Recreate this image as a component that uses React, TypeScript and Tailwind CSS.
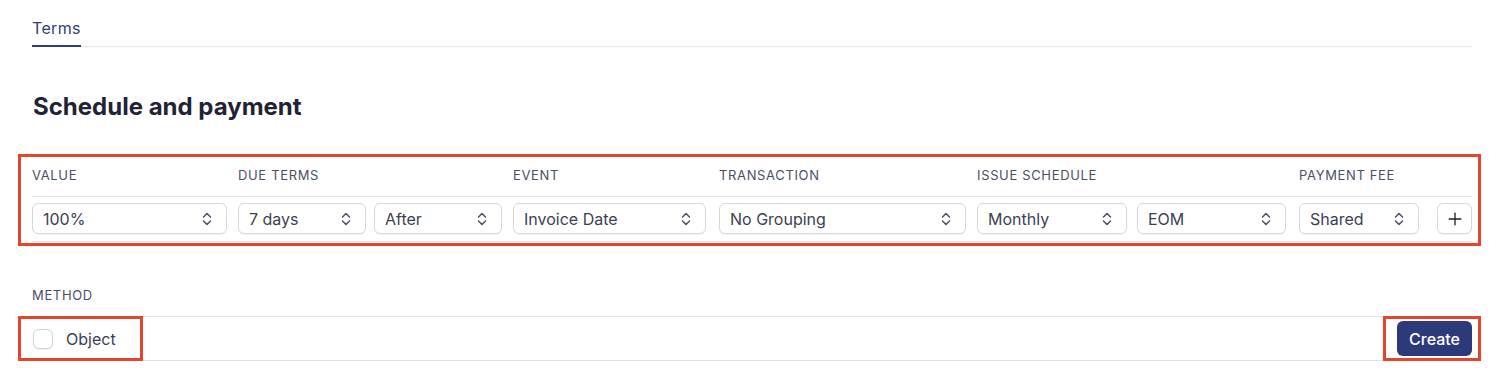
import { Plus } from 'lucide-react'

const ROW = [
  { value: '100%', className: 'w-[195px]' },
  { value: '7 days', className: 'w-[128px]' },
  { value: 'After', className: 'w-[128px]' },
  { value: 'Invoice Date', className: 'w-[193px]' },
  { value: 'No Grouping', className: 'w-[247px]' },
  { value: 'Monthly', className: 'w-[150px]' },
  { value: 'EOM', className: 'w-[149px]' },
  { value: 'Shared', className: 'w-[120px]' },
]

const HEADERS = [
  { label: 'Value', className: 'col-span-1' },
  { label: 'Due terms', className: 'col-span-2' },
  { label: 'Event', className: 'col-span-1' },
  { label: 'Transaction', className: 'col-span-1' },
  { label: 'Issue schedule', className: 'col-span-2' },
  { label: 'Payment fee', className: 'col-span-1' },
  { label: '', className: 'col-span-1' },
]

const COLS = 'grid grid-cols-[206px_136px_139px_206px_258px_160px_162px_138px_35px]'

function Chevrons() {
  return (
    <svg width="10" height="16" viewBox="0 0 10 16" fill="none" stroke="#4b5066" strokeWidth="1.5" strokeLinecap="round" strokeLinejoin="round">
      <path d="M1.5 6 L5 2.5 L8.5 6" />
      <path d="M1.5 10 L5 13.5 L8.5 10" />
    </svg>
  )
}

function Select({ value, className }: { value: string; className: string }) {
  return (
    <div
      className={`${className} h-[31px] flex items-center justify-between pl-[10px] pr-[14px] bg-white border border-[#d6d8de] rounded-md shadow-[0_1px_1px_rgba(0,0,0,0.05)] text-[16px] text-[#3b3f54]`}
    >
      <span>{value}</span>
      <Chevrons />
    </div>
  )
}

function Highlight({ className }: { className: string }) {
  return <div className={`absolute border-[3px] border-[#e8442c] pointer-events-none ${className}`} />
}

export default function App() {
  return (
    <div className="w-[1502px] h-[382px] bg-white pl-8 pr-[30px] font-['Inter',_sans-serif] overflow-hidden">
      <div className="flex border-b border-[#e4e6ec]">
        <div className="pt-[16px] pb-[5px] border-b-2 border-[#2e3d84] -mb-px text-[16px] leading-6 tracking-[0.02em] text-[#2e3d84]">
          Terms
        </div>
      </div>

      <h2 className="mt-[44px] text-[24px] leading-8 font-bold text-[#1f2335] pl-px">Schedule and payment</h2>

      <div className="relative mt-[34px]">
        <Highlight className="-left-[14px] -right-[9px] -top-[3px] -bottom-[4px]" />
        <div className={`${COLS} pt-[10px] pb-[13px] border-b border-[#dfe1e6]`}>
          {HEADERS.map((h, i) => (
            <div key={i} className={`${h.className} text-[13px] leading-4 uppercase tracking-wider text-[#4a4f63]`}>
              {h.label}
            </div>
          ))}
        </div>
        <div className={`${COLS} pt-[6px] pb-[7px] border-b border-[#dfe1e6]`}>
          {ROW.map((r) => (
            <div key={r.value}>
              <Select value={r.value} className={r.className} />
            </div>
          ))}
          <button
            type="button"
            className="w-[35px] h-[31px] flex items-center justify-center bg-white border border-[#d6d8de] rounded-md shadow-[0_1px_1px_rgba(0,0,0,0.05)]"
          >
            <Plus size={20} strokeWidth={1.6} color="#1f2024" />
          </button>
        </div>
      </div>

      <div className="mt-[45px] text-[13px] leading-4 uppercase tracking-wider text-[#4a4f63] pb-[13px] border-b border-[#dfe1e6]">
        Method
      </div>
      <div className="relative h-[44px] flex items-center justify-between border-b border-[#dfe1e6]">
        <Highlight className="-left-[14px] w-[125px] -top-[1px] -bottom-[1px]" />
        <Highlight className="-right-[9px] w-[98px] -top-[1px] -bottom-[1px]" />
        <label className="flex items-center gap-[13px] pl-px">
          <span className="w-5 h-5 rounded-md border border-[#cfd2d9] bg-white shadow-[0_1px_1px_rgba(0,0,0,0.06)]" />
          <span className="text-[16px] text-[#3b3f54]">Object</span>
        </label>
        <button type="button" className="w-[75px] h-[35px] rounded-md bg-[#2c3a7a] text-white text-[16px] font-medium">
          Create
        </button>
      </div>
    </div>
  )
}
